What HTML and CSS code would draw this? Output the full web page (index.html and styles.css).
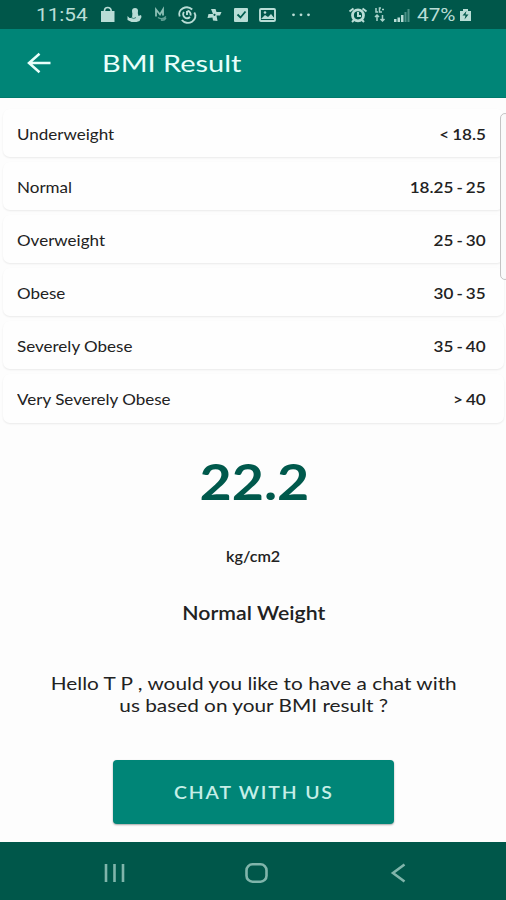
FILE: index.html
```html
<!DOCTYPE html>
<html lang="en">
<head>
<meta charset="utf-8">
<title>BMI Result</title>
<link rel="stylesheet" href="styles.css">
</head>
<body>
<div class="status">
  <span class="clock"><span class="wide">11:54</span></span>
  <svg class="icons" width="321" height="30" viewBox="96 0 321 30" fill="#b9ddd6">
    <path d="M101 11h13.500v11H101z"/><path d="M104.500 12v-1.500a3.300 3 0 0 1 6.600 0V12" fill="none" stroke="#b9ddd6" stroke-width="1.600"/>
    <circle cx="135" cy="11" r="3"/><path d="M132.500 12h5l1 4 2.500-1 .5 2-2 4-3 1h-5l-4-2v-4l2 2h2.500z"/><path d="M131 17.500q3 2 5 0" fill="none" stroke="#3d8578" stroke-width="1"/>
    <g fill="none" stroke="#8cbfb5"><path d="M156 16.500v-7l4 5 3-5v6" stroke-width="1.800"/><path d="M158 17.500q4 3 8-1M161 20q3 1 5-2" stroke="#5f9f94" stroke-width="1.400"/></g>
    <g fill="none" stroke="#b9ddd6" stroke-width="1.900"><path d="M179.700 16.500a7.500 6.800 0 0 1 12.500-7M194.300 12.500a7.500 6.800 0 0 1-12.500 7.500"/><path d="M184 12a4 3.800 0 0 0 6 5M190.500 15.500a4 3.800 0 0 0-3-4.700M187 11v4"/></g>
    <path d="M213 14l-2-5h4.500l1 3 5 0-1.500 3.500-3.500 0 1 5.500-4.500-.5-.5-3-5 .5 1-4z"/><circle cx="214.500" cy="14.800" r="1.100" fill="#00574a"/>
    <rect x="234" y="8" width="14" height="14" rx="1"/><path d="M237.500 14.500l3 3 5-6" fill="none" stroke="#005c4e" stroke-width="1.800"/>
    <rect x="260" y="9" width="15" height="12" rx="1" fill="none" stroke="#b9ddd6" stroke-width="1.900"/><path d="M261 19l4-4 3 2 3-3 4 5z"/><circle cx="265" cy="12.500" r="1.300"/>
    <circle cx="293.500" cy="14.800" r="1.400"/><circle cx="301" cy="14.800" r="1.400"/><circle cx="308.500" cy="14.800" r="1.400"/>
    <circle cx="358" cy="15.300" r="5.500" fill="none" stroke="#b9ddd6" stroke-width="2.800"/><path d="M358 12v4h3M349.500 11.500l4-3M366.500 11.500l-4-3M354 20l-2 2M362 20l2 2" fill="none" stroke="#b9ddd6" stroke-width="2"/>
    <g fill="none" stroke="#a8d2ca" stroke-width="1.500"><path d="M376 8v4h2M381 8h-1.500v4H382M382 9.500h2M377 15v6M375 17l2-2 2 2M382.500 15v6M380.500 19l2 2 2-2"/></g>
    <path d="M394 19h2.500v3H394zM397.500 17.500h2.500V22h-2.500zM401 15h2.500v7H401z"/><path d="M404.500 12h2v10h-2zM407.500 9h2v13h-2z" fill="#4c9186"/>
  </svg>
  <span class="percent"><span class="wide">47%</span></span>
  <svg class="battery" width="13" height="14" viewBox="0 0 13 14"><path d="M1 3h3V1h5v2h3v10H1z" fill="#b9ddd6"/><path d="M7.500 3l-4 4.500h3l-1 4 4-5h-3z" fill="#00574a"/></svg>
</div>
<header class="appbar">
  <svg class="back" width="24" height="22" viewBox="0 0 24 22" fill="none" stroke="#e9fffb" stroke-width="2.500"><path d="M23.500 11H2M12.500 1.800L2 11l10.500 9.200"/></svg>
  <h1><span class="wide">BMI Result</span></h1>
</header>
<main>
  <ul class="ranges">
    <li><span class="name">Underweight</span><span class="value">&lt; 18.5</span></li>
    <li><span class="name">Normal</span><span class="value">18.25 - 25</span></li>
    <li><span class="name">Overweight</span><span class="value">25 - 30</span></li>
    <li><span class="name">Obese</span><span class="value">30 - 35</span></li>
    <li><span class="name">Severely Obese</span><span class="value">35 - 40</span></li>
    <li><span class="name">Very Severely Obese</span><span class="value">&gt; 40</span></li>
  </ul>
  <div class="score">22.2</div>
  <div class="unit">kg/cm2</div>
  <div class="verdict">Normal Weight</div>
  <p class="prompt">Hello T P , would you like to have a chat with<br>us based on your BMI result ?</p>
  <button class="chat"><span>CHAT WITH US</span></button>
  <div class="edge-panel"></div>
</main>
<nav class="navbar">
  <svg width="24" height="20" viewBox="0 0 24 20" stroke="#80b5ab" stroke-width="2.600"><path d="M3 1v18M11.500 1v18M20 1v18"/></svg>
  <svg width="24" height="20" viewBox="0 0 24 20" fill="none" stroke="#80b5ab" stroke-width="2.600"><rect x="1.500" y="1.300" width="20" height="17.400" rx="6"/></svg>
  <svg width="24" height="20" viewBox="0 0 24 20" fill="none" stroke="#80b5ab" stroke-width="2.600"><path d="M18.500 1.500L7 10l11.500 8.500"/></svg>
</nav>
</body>
</html>
```
FILE: styles.css
```css
* { box-sizing: border-box; }
body {
  margin: 0;
  width: 506px;
  height: 900px;
  display: flex;
  flex-direction: column;
  overflow: hidden;
  background: #fdfdfd;
  color: #222;
  font-family: Lato, "Liberation Sans", sans-serif;
}
.wide { display: inline-block; transform: scaleX(1.15); transform-origin: left; white-space: nowrap; }
.status {
  display: flex;
  align-items: center;
  height: 29px;
  padding-left: 36px;
  background: #00574a;
  color: #b9ddd6;
  font: 18px/30px Roboto, sans-serif;
  white-space: nowrap;
}
.clock { width: 60px; flex: none; }
.icons { flex: none; }
.percent { width: 42px; flex: none; }
.battery { flex: none; }
.appbar {
  display: flex;
  align-items: center;
  height: 69px;
  padding-left: 27px;
  background: #008577;
  border-bottom: 1px solid #007a6c;
  color: #e9fffb;
}
.back { width: 24px; margin-right: 51px; }
h1 { margin: 0; font-size: 24px; font-weight: 400; line-height: 30px; }
h1 .wide { transform: scaleX(1.205); }
main {
  position: relative;
  flex: 1;
  display: flex;
  flex-direction: column;
  align-items: center;
  padding-left: 1px;
}
.ranges {
  align-self: stretch;
  display: flex;
  flex-direction: column;
  gap: 5px;
  margin: 0;
  padding: 11px 2px 0;
  list-style: none;
}
.ranges li {
  display: flex;
  align-items: center;
  justify-content: space-between;
  height: 48.100px;
  padding: 1px 18px 0 14px;
  border-radius: 7px;
  background: #fefefe;
  box-shadow: 0 1px 2px rgba(0, 0, 0, .08);
  font-size: 15px;
}
.name { transform: scaleX(1.135); transform-origin: left; }
.value { transform: scaleX(1.14); transform-origin: right; font-weight: 600; word-spacing: -1.100px; }
.score { margin: 28.600px 0 0 2px; color: #00594c; font-size: 50px; font-weight: 700; line-height: 60px; transform: scaleX(1.11); }
.unit { margin-top: 35px; font-size: 15px; font-weight: 600; line-height: 20px; transform: scaleX(1.08); }
.verdict { margin-top: 35px; font-size: 19px; font-weight: 600; line-height: 24px; transform: scaleX(1.12); }
.prompt { margin: 47px 0 0; font-size: 18px; line-height: 22px; text-align: center; white-space: nowrap; transform: scaleX(1.155); }
.chat {
  width: 281px;
  height: 64px;
  margin-top: 44px;
  padding: 0;
  border: 0;
  border-radius: 4px;
  background: #008577;
  box-shadow: 0 1px 2px rgba(0, 0, 0, .35);
  color: #c5eee7;
  font: 600 18px/24px Lato, sans-serif;
  letter-spacing: 1.700px;
}
.chat span { display: inline-block; transform: scaleX(1.08); }
.edge-panel {
  position: absolute;
  top: 15px;
  right: -4px;
  width: 10px;
  height: 167px;
  border: 1px solid #c4c4c4;
  border-radius: 6px;
  background: #fafafa;
}
.navbar {
  display: flex;
  align-items: center;
  justify-content: space-between;
  height: 58px;
  padding: 3px 96px 0 103px;
  background: #00574a;
}
```
